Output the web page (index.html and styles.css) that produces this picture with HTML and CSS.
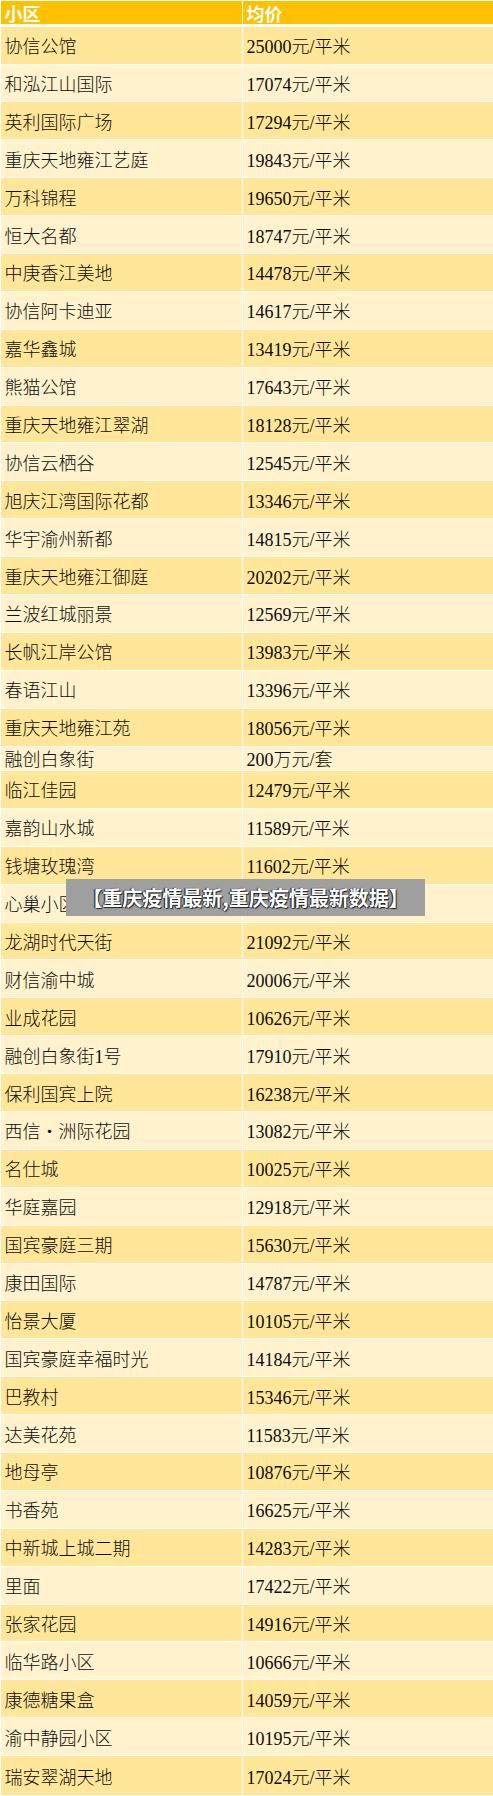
FILE: index.html
```html
<!DOCTYPE html>
<html lang="zh-CN">
<head>
<meta charset="utf-8">
<title>重庆小区均价</title>
<link rel="stylesheet" href="styles.css">
</head>
<body>
<div class="page">
  <div class="sheet">
    <div class="row row--head"><div class="cell">小区</div><div class="cell">均价</div></div>
    <div class="row row--dark"><div class="cell">协信公馆</div><div class="cell">25000元/平米</div></div>
    <div class="row row--light"><div class="cell">和泓江山国际</div><div class="cell">17074元/平米</div></div>
    <div class="row row--dark"><div class="cell">英利国际广场</div><div class="cell">17294元/平米</div></div>
    <div class="row row--light"><div class="cell">重庆天地雍江艺庭</div><div class="cell">19843元/平米</div></div>
    <div class="row row--dark"><div class="cell">万科锦程</div><div class="cell">19650元/平米</div></div>
    <div class="row row--light"><div class="cell">恒大名都</div><div class="cell">18747元/平米</div></div>
    <div class="row row--dark"><div class="cell">中庚香江美地</div><div class="cell">14478元/平米</div></div>
    <div class="row row--light"><div class="cell">协信阿卡迪亚</div><div class="cell">14617元/平米</div></div>
    <div class="row row--dark"><div class="cell">嘉华鑫城</div><div class="cell">13419元/平米</div></div>
    <div class="row row--light"><div class="cell">熊猫公馆</div><div class="cell">17643元/平米</div></div>
    <div class="row row--dark"><div class="cell">重庆天地雍江翠湖</div><div class="cell">18128元/平米</div></div>
    <div class="row row--light"><div class="cell">协信云栖谷</div><div class="cell">12545元/平米</div></div>
    <div class="row row--dark"><div class="cell">旭庆江湾国际花都</div><div class="cell">13346元/平米</div></div>
    <div class="row row--light"><div class="cell">华宇渝州新都</div><div class="cell">14815元/平米</div></div>
    <div class="row row--dark"><div class="cell">重庆天地雍江御庭</div><div class="cell">20202元/平米</div></div>
    <div class="row row--light"><div class="cell">兰波红城丽景</div><div class="cell">12569元/平米</div></div>
    <div class="row row--dark"><div class="cell">长帆江岸公馆</div><div class="cell">13983元/平米</div></div>
    <div class="row row--light"><div class="cell">春语江山</div><div class="cell">13396元/平米</div></div>
    <div class="row row--dark"><div class="cell">重庆天地雍江苑</div><div class="cell">18056元/平米</div></div>
    <div class="row row--light row--short"><div class="cell">融创白象街</div><div class="cell">200万元/套</div></div>
    <div class="row row--dark"><div class="cell">临江佳园</div><div class="cell">12479元/平米</div></div>
    <div class="row row--light"><div class="cell">嘉韵山水城</div><div class="cell">11589元/平米</div></div>
    <div class="row row--dark"><div class="cell">钱塘玫瑰湾</div><div class="cell">11602元/平米</div></div>
    <div class="row row--light"><div class="cell cell--clip">心巢小区</div><div class="cell"></div></div>
    <div class="row row--dark"><div class="cell">龙湖时代天街</div><div class="cell">21092元/平米</div></div>
    <div class="row row--light"><div class="cell">财信渝中城</div><div class="cell">20006元/平米</div></div>
    <div class="row row--dark"><div class="cell">业成花园</div><div class="cell">10626元/平米</div></div>
    <div class="row row--light"><div class="cell">融创白象街1号</div><div class="cell">17910元/平米</div></div>
    <div class="row row--dark"><div class="cell">保利国宾上院</div><div class="cell">16238元/平米</div></div>
    <div class="row row--light"><div class="cell">西信・洲际花园</div><div class="cell">13082元/平米</div></div>
    <div class="row row--dark"><div class="cell">名仕城</div><div class="cell">10025元/平米</div></div>
    <div class="row row--light"><div class="cell">华庭嘉园</div><div class="cell">12918元/平米</div></div>
    <div class="row row--dark"><div class="cell">国宾豪庭三期</div><div class="cell">15630元/平米</div></div>
    <div class="row row--light"><div class="cell">康田国际</div><div class="cell">14787元/平米</div></div>
    <div class="row row--dark"><div class="cell">怡景大厦</div><div class="cell">10105元/平米</div></div>
    <div class="row row--light"><div class="cell">国宾豪庭幸福时光</div><div class="cell">14184元/平米</div></div>
    <div class="row row--dark"><div class="cell">巴教村</div><div class="cell">15346元/平米</div></div>
    <div class="row row--light"><div class="cell">达美花苑</div><div class="cell">11583元/平米</div></div>
    <div class="row row--dark"><div class="cell">地母亭</div><div class="cell">10876元/平米</div></div>
    <div class="row row--light"><div class="cell">书香苑</div><div class="cell">16625元/平米</div></div>
    <div class="row row--dark"><div class="cell">中新城上城二期</div><div class="cell">14283元/平米</div></div>
    <div class="row row--light"><div class="cell">里面</div><div class="cell">17422元/平米</div></div>
    <div class="row row--dark"><div class="cell">张家花园</div><div class="cell">14916元/平米</div></div>
    <div class="row row--light"><div class="cell">临华路小区</div><div class="cell">10666元/平米</div></div>
    <div class="row row--dark"><div class="cell">康德糖果盒</div><div class="cell">14059元/平米</div></div>
    <div class="row row--light"><div class="cell">渝中静园小区</div><div class="cell">10195元/平米</div></div>
    <div class="row row--dark row--last"><div class="cell">瑞安翠湖天地</div><div class="cell">17024元/平米</div></div>
  </div>
  <div class="caption">【重庆疫情最新,重庆疫情最新数据】</div>
</div>
</body>
</html>
```

FILE: styles.css
```css
html, body {
  margin: 0;
  padding: 0;
  background: #ffffff;
}

.page {
  position: relative;
  width: 493px;
  padding: 1px 1px 0 1px;
  box-sizing: border-box;
  font-family: "Liberation Serif", "Noto Sans CJK SC", serif;
  font-size: 18px;
  color: #0d0d0d;
}

.sheet {
  display: flex;
  flex-direction: column;
  gap: 1px;
}

.row {
  display: grid;
  grid-template-columns: 241px 250px;
  column-gap: 1px;
  height: 36.9px;
}

.row--head {
  height: 23.4px;
  margin-bottom: 1.3px;
}

.row--short {
  height: 23.4px;
}

.row--last {
  height: 39px;
}

.cell {
  display: flex;
  align-items: center;
  padding-left: 3.5px;
  white-space: nowrap;
  overflow: hidden;
  font-weight: 300;
}

.cell--clip {
  padding-right: 178px;
}

.row--head .cell {
  background: #ffc000;
  color: #ffffff;
  font-weight: 700;
  padding-top: 1px;
}

.row--dark .cell {
  background: #ffe699;
}

.row--light .cell {
  background: #fff2cc;
}

.caption {
  position: absolute;
  left: 66px;
  top: 879px;
  width: 359px;
  height: 37px;
  background: #9f9f9f;
  color: #ffffff;
  font-family: "Noto Sans CJK SC", sans-serif;
  font-weight: 700;
  font-size: 20px;
  display: flex;
  align-items: center;
  justify-content: center;
  text-shadow: -1px 0 1px #111, 1px 1px 1px #222;
}
```
